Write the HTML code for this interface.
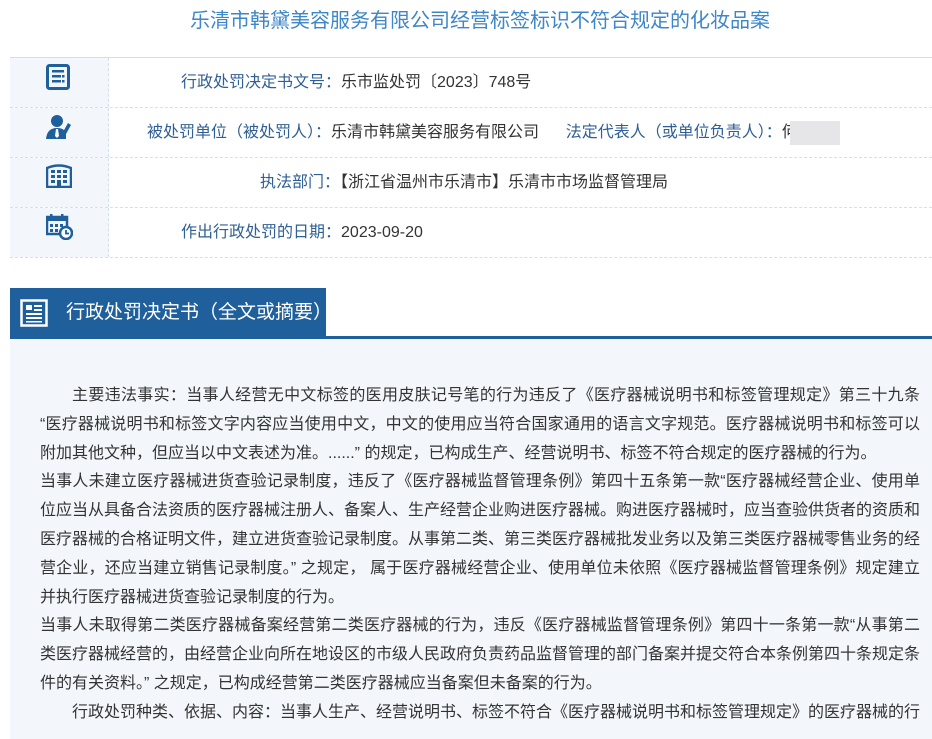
<!DOCTYPE html>
<html><head><meta charset="utf-8">
<style>
body{margin:0;width:932px;height:725px;overflow:hidden;background:#fff;font-family:"Liberation Sans","Noto Sans CJK SC",sans-serif;}
.title{position:absolute;left:0;width:960px;top:6px;text-align:center;font-size:20px;color:#3d86c8;line-height:30px;}
.tbl{position:absolute;left:10px;top:57px;width:922px;border-top:1px solid #cfdfee;}
.row{height:49px;border-bottom:1px dashed #d3e0ee;display:flex;}
.ic{width:98px;background:#f3f7fc;border-right:1px dashed #d3e0ee;position:relative;}
.ic svg{position:absolute;left:36px;top:6px;}
.tx{flex:1;font-size:16px;line-height:50px;color:#333;white-space:nowrap;}
.lb{color:#2f5f95;}
.hd{position:absolute;left:10px;top:288px;width:316px;height:50px;background:#1f5f9b;color:#fff;font-size:19px;line-height:50px;}
.hdline{position:absolute;left:10px;top:336px;width:922px;height:3px;background:#1f5f9b;}
.body{position:absolute;left:10px;top:339px;width:922px;height:400px;background:#f3f7fc;}
.txt{position:absolute;left:40px;top:382px;width:880px;font-size:16px;line-height:28.8px;color:#333;}
.txt div{white-space:nowrap;text-align:justify;text-align-last:justify;}
.txt div.l{text-align-last:left;}
</style></head><body>
<div class="title">乐清市韩黛美容服务有限公司经营标签标识不符合规定的化妆品案</div>
<div class="tbl">
<div class="row"><div class="ic"><svg width="24" height="26" viewBox="0 0 24 26"><rect x="1.5" y="1.5" width="21" height="23" rx="2" fill="none" stroke="#1f5f9b" stroke-width="3"/><rect x="6" y="6" width="12" height="2.5" fill="#1f5f9b"/><rect x="6" y="11" width="9" height="2.5" fill="#1f5f9b"/><rect x="16" y="11" width="2.5" height="2.5" fill="#1f5f9b"/><rect x="6" y="16" width="9" height="2.5" fill="#1f5f9b"/><rect x="16" y="16" width="2.5" height="2.5" fill="#1f5f9b"/></svg></div><div class="tx" style="padding-left:72px"><span class="lb">行政处罚决定书文号：</span>乐市监处罚〔2023〕748号</div></div>
<div class="row"><div class="ic"><svg width="26" height="26" viewBox="0 0 26 26"><circle cx="11" cy="7" r="6" fill="#1f5f9b"/><path d="M0 25 Q1 14 11 14 Q19 14 20 20 L20 25 Z" fill="#1f5f9b"/><path d="M10 15 L12 15 L13 22 L11 24 L9 22 Z" fill="#fff"/><path d="M22 9 L25 11 L20 20 L17 21 L17 18 Z" fill="#1f5f9b"/></svg></div><div class="tx" style="padding-left:38px"><span class="lb">被处罚单位（被处罚人）：</span>乐清市韩黛美容服务有限公司&nbsp;&nbsp;&nbsp;&nbsp;&nbsp;&nbsp;<span class="lb">法定代表人（或单位负责人）：</span>何<span style="display:inline-block;width:50px;height:24px;background:#e6e6e8;vertical-align:middle;margin-left:-8px"></span></div></div>
<div class="row"><div class="ic"><svg width="26" height="24" viewBox="0 0 26 24"><path d="M1 4 Q13 -1 25 4 L25 23 L1 23 Z" fill="none" stroke="#1f5f9b" stroke-width="2.5"/><g fill="#1f5f9b"><rect x="5" y="6" width="4" height="3"/><rect x="11" y="6" width="4" height="3"/><rect x="17" y="6" width="4" height="3"/><rect x="5" y="11" width="4" height="3"/><rect x="11" y="11" width="4" height="3"/><rect x="17" y="11" width="4" height="3"/><rect x="5" y="16" width="4" height="3"/><rect x="11" y="16" width="4" height="7"/><rect x="17" y="16" width="4" height="3"/></g></svg></div><div class="tx" style="padding-left:151px"><span class="lb">执法部门：</span>【浙江省温州市乐清市】乐清市市场监督管理局</div></div>
<div class="row"><div class="ic"><svg width="27" height="26" viewBox="0 0 27 26"><rect x="1" y="3" width="20" height="17" fill="none" stroke="#1f5f9b" stroke-width="2.5"/><rect x="1" y="3" width="20" height="4" fill="#1f5f9b"/><rect x="4" y="0" width="2.5" height="5" fill="#1f5f9b"/><rect x="15" y="0" width="2.5" height="5" fill="#1f5f9b"/><g fill="#1f5f9b"><rect x="4" y="10" width="3" height="3"/><rect x="9" y="10" width="3" height="3"/><rect x="14" y="10" width="3" height="3"/><rect x="4" y="15" width="3" height="3"/><rect x="9" y="15" width="3" height="3"/></g><circle cx="20" cy="19" r="6" fill="#fff" stroke="#1f5f9b" stroke-width="2.5"/><path d="M20 16 L20 19.5 L23 19.5" fill="none" stroke="#1f5f9b" stroke-width="1.8"/></svg></div><div class="tx" style="padding-left:72px"><span class="lb">作出行政处罚的日期：</span>2023-09-20</div></div>
</div>
<div class="body"></div>
<div class="hdline"></div>
<div class="hd"><svg style="position:absolute;left:10px;top:11px" width="28" height="28" viewBox="0 0 28 28"><rect x="1.5" y="1.5" width="25" height="25" fill="none" stroke="#fff" stroke-width="2.5"/><g fill="#fff"><rect x="6" y="6" width="6" height="5"/><rect x="14" y="6" width="8" height="2"/><rect x="14" y="10" width="8" height="2"/><rect x="6" y="14" width="16" height="2"/><rect x="6" y="18" width="16" height="2"/><rect x="6" y="22" width="16" height="1.5"/></g></svg><span style="position:absolute;left:56px">行政处罚决定书（全文或摘要）</span></div>
<div class="txt">
<div style="padding-left:32px">主要违法事实：当事人经营无中文标签的医用皮肤记号笔的行为违反了《医疗器械说明书和标签管理规定》第三十九条</div>
<div>“医疗器械说明书和标签文字内容应当使用中文，中文的使用应当符合国家通用的语言文字规范。医疗器械说明书和标签可以</div>
<div class="l">附加其他文种，但应当以中文表述为准。......” 的规定，已构成生产、经营说明书、标签不符合规定的医疗器械的行为。</div>
<div>当事人未建立医疗器械进货查验记录制度，违反了《医疗器械监督管理条例》第四十五条第一款“医疗器械经营企业、使用单</div>
<div>位应当从具备合法资质的医疗器械注册人、备案人、生产经营企业购进医疗器械。购进医疗器械时，应当查验供货者的资质和</div>
<div>医疗器械的合格证明文件，建立进货查验记录制度。从事第二类、第三类医疗器械批发业务以及第三类医疗器械零售业务的经</div>
<div>营企业，还应当建立销售记录制度。” 之规定， 属于医疗器械经营企业、使用单位未依照《医疗器械监督管理条例》规定建立</div>
<div class="l">并执行医疗器械进货查验记录制度的行为。</div>
<div>当事人未取得第二类医疗器械备案经营第二类医疗器械的行为，违反《医疗器械监督管理条例》第四十一条第一款“从事第二</div>
<div>类医疗器械经营的，由经营企业向所在地设区的市级人民政府负责药品监督管理的部门备案并提交符合本条例第四十条规定条</div>
<div class="l">件的有关资料。” 之规定，已构成经营第二类医疗器械应当备案但未备案的行为。</div>
<div style="padding-left:32px">行政处罚种类、依据、内容：当事人生产、经营说明书、标签不符合《医疗器械说明书和标签管理规定》的医疗器械的行</div>
</div>
</body></html>
